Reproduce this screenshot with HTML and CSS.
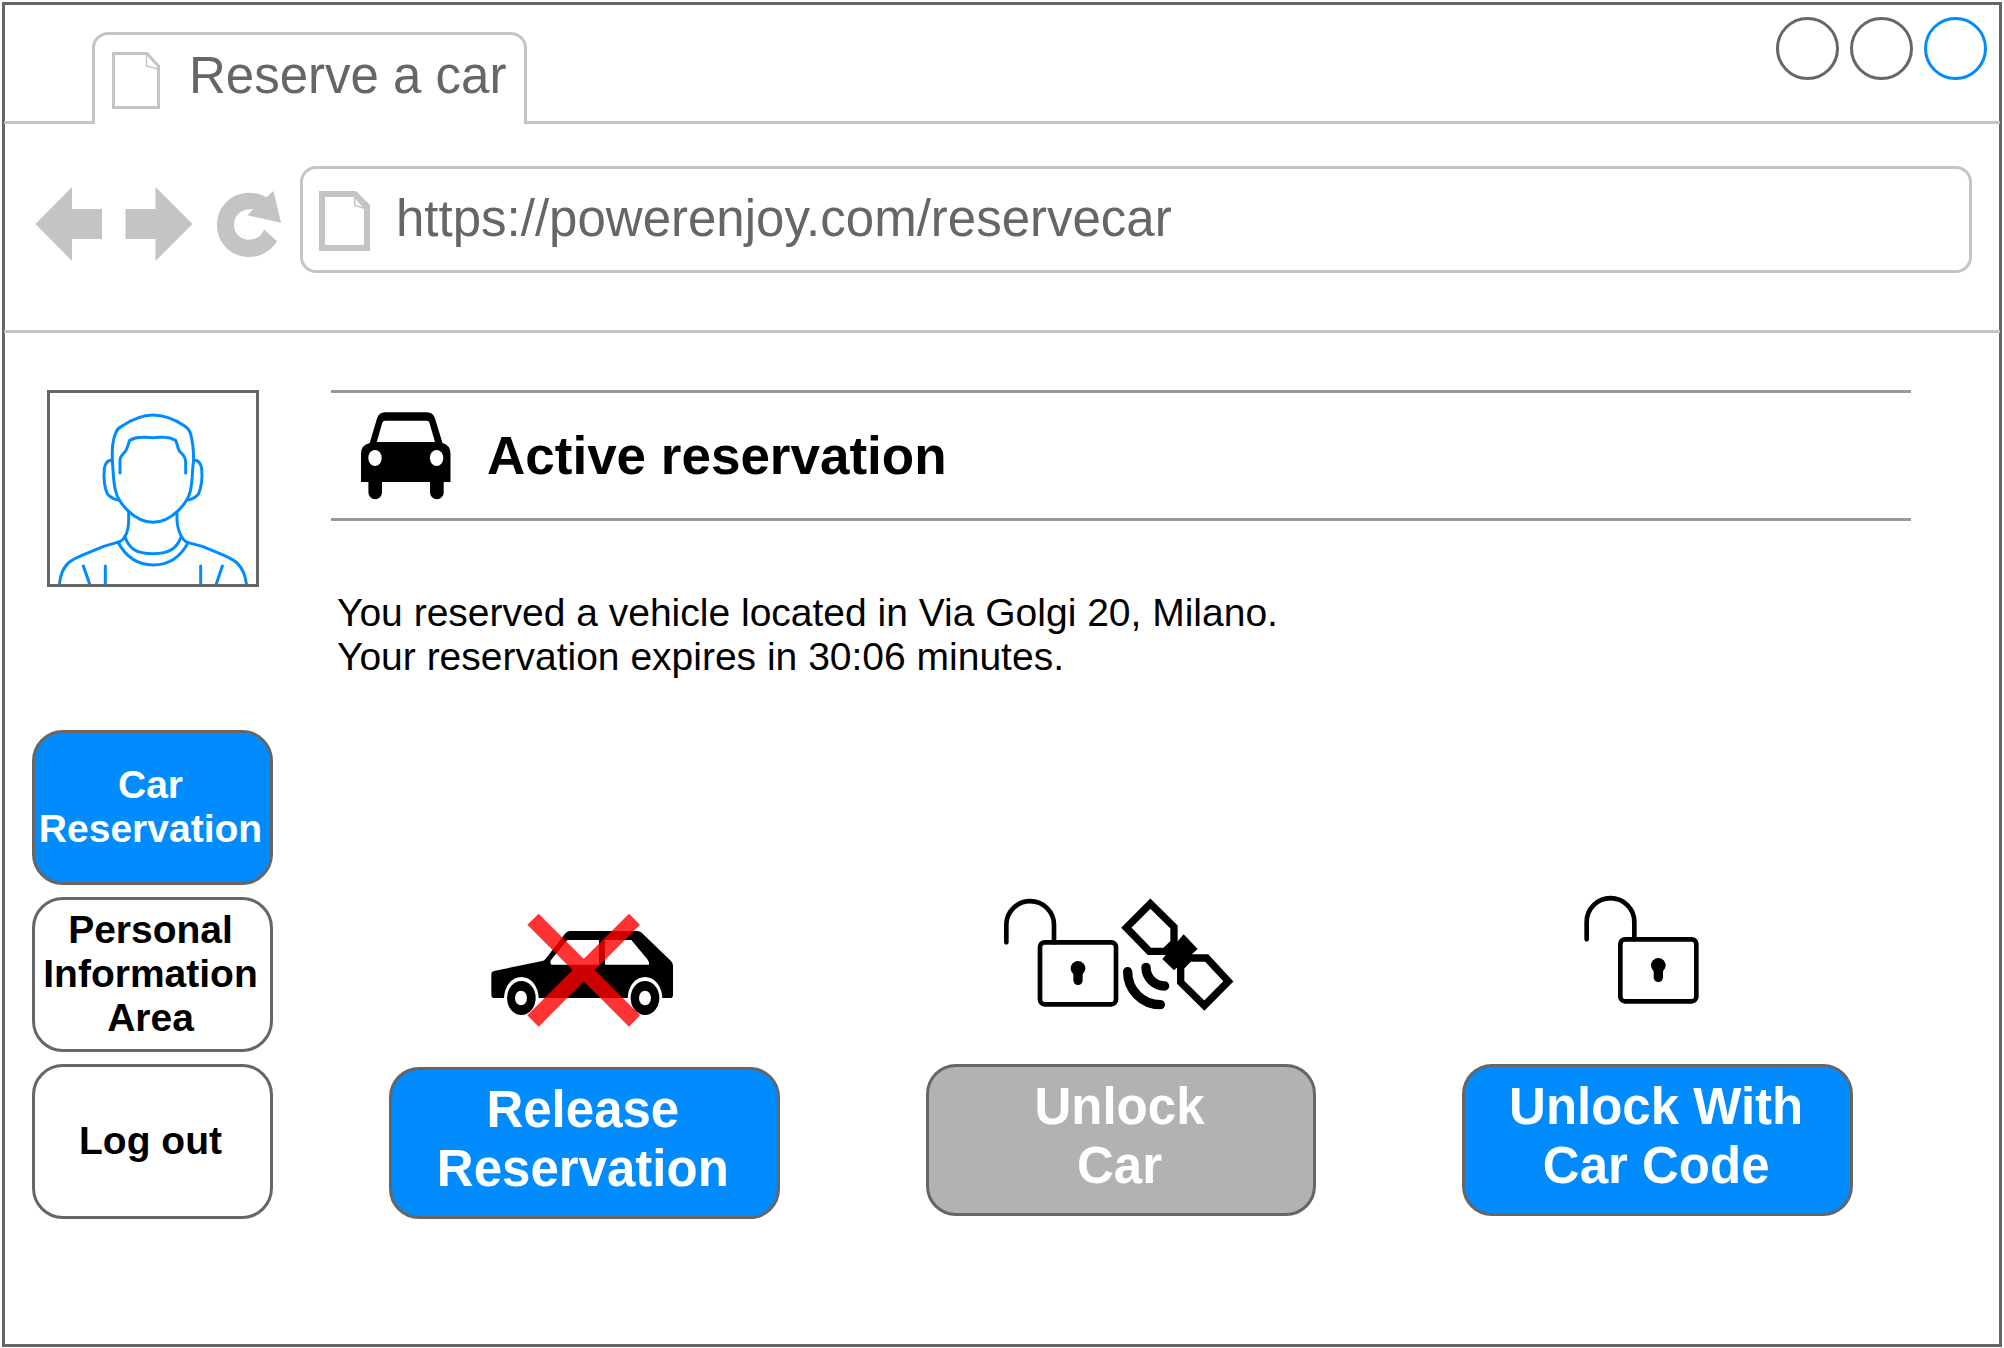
FILE: index.html
```html
<!DOCTYPE html>
<html lang="en">
<head>
<meta charset="utf-8">
<title>Reserve a car</title>
<link rel="stylesheet" href="styles.css">
</head>
<body>
<div class="window">
  <header class="titlebar">
    <div class="tab">
      <svg class="tab-icon" viewBox="0 0 48 57" aria-hidden="true">
        <path class="page-outline" stroke-width="3" d="M1.5 1.5H35L46.500 14V55.500H1.500Z"/>
        <path class="page-outline" stroke-width="1.500" d="M34.500 2V14L46 17"/>
      </svg>
      <span class="tab-label">Reserve a car</span>
    </div>
    <div class="window-controls">
      <button class="control" type="button" aria-label="Minimize"></button>
      <button class="control" type="button" aria-label="Maximize"></button>
      <button class="control control-close" type="button" aria-label="Close"></button>
    </div>
  </header>

  <div class="toolbar">
    <div class="history">
      <button class="tool" type="button" aria-label="Back">
        <svg viewBox="34 178 70 84"><path d="M35.500 224L72 187V209H102V239H72V261Z"/></svg>
      </button>
      <button class="tool" type="button" aria-label="Forward">
        <svg viewBox="124 178 70 84"><path d="M192.500 224L155.500 187V209H125.500V239H155.500V261Z"/></svg>
      </button>
      <button class="tool" type="button" aria-label="Reload">
        <svg viewBox="214 178 70 84"><path d="M273.500 191L281 222.700L247.500 215.300L253 209.300C242 208 234 215 234 225C234 234 241 239.700 249 239.700C256 239.700 262 236 264 229.300L277 241.300C271 251 261 257 249 257C231 257 217 243 217 225C217 207 231 192.700 249 192.700C255 192.700 261 194 266.300 197.300Z"/></svg>
      </button>
    </div>
    <div class="address">
      <svg class="address-icon" viewBox="0 0 51 60" aria-hidden="true">
        <path fill="#c4c4c4" fill-rule="evenodd" d="M0 0H37L51 14V60H0ZM6 6V54H45V18L35 15V6Z"/>
        <path fill="#fff" d="M36.500 8V14L43.500 16Z"/>
      </svg>
      <input class="address-input" type="text" aria-label="Address" value="https://powerenjoy.com/reservecar">
    </div>
  </div>

  <div class="page">
    <aside class="sidebar">
      <svg class="avatar" viewBox="89 66 618 573" role="img" aria-label="User picture">
        <path d="M276 268C274 230 280 200 286 186Q290 174 302 167C330 148 365 132 398 132C431 132 464 146 492 164Q506 173 510 186C516 206 520 240 520 268"/>
        <path d="M299 306V268Q299 260 305 253L316 240C322 230 324 218 328 208Q344 199 365 199Q381 198 398 200Q415 198 431 199Q450 199 466 208C471 218 471 230 477 240L489 253Q496 262 496 272V306"/>
        <path d="M276 268C279 300 278 332 286 360C294 396 342 454 398 454C454 454 502 396 510 360C517 330 515 300 520 268"/>
        <path d="M276 268C262 266 255 278 252 292C249 325 252 350 262 370Q276 386 298 388M520 268C534 266 541 278 544 292C547 325 543 350 534 370Q520 386 498 388"/>
        <path d="M325 427V447C325 482 313 510 291 514L250 526L190 551Q150 568 142 578C128 592 119 614 117 645M470 427V447C472 484 488 510 503 515L546 526L606 551Q644 568 652 578C668 594 676 614 679 645"/>
        <path d="M313 496C326 532 345 548 398 548C450 548 471 530 483 496M293 514C318 560 350 582 398 582C446 582 480 560 503 515"/>
        <path d="M189 585L210 645M255 585V645M541 585V645M606 585L586 645"/>
      </svg>
      <nav class="menu">
        <a class="menu-item menu-item-active" href="#reservation">Car Reservation</a>
        <a class="menu-item" href="#personal">Personal Information Area</a>
        <a class="menu-item" href="#logout">Log out</a>
      </nav>
    </aside>

    <main class="content">
      <div class="heading">
        <svg class="heading-icon" viewBox="361 411 90 88" aria-hidden="true">
          <path fill-rule="evenodd" d="M369.700 442L377 417.500Q379 411.300 385 411.300H427Q433 411.300 435 417.500L442.500 442Q450.500 444 450.500 453V481H443.700V491.500A6.800 6.800 0 0 1 430 491.500V481H382V491.500A6.800 6.800 0 0 1 368.400 491.500V481H361V453Q361 444 369.700 442ZM376.800 441H435L429.400 421.700Q429 419.700 427 419.700H385Q383 419.700 382.300 421.700Z"/>
          <ellipse fill="#fff" cx="375" cy="457" rx="6.700" ry="8"/>
          <ellipse fill="#fff" cx="436.600" cy="457" rx="6.700" ry="8"/>
        </svg>
        <h1 class="title">Active reservation</h1>
      </div>

      <p class="status">You reserved a vehicle located in Via Golgi 20, Milano.<br>Your reservation expires in 30:06 minutes.</p>

      <div class="actions">
        <div class="action">
          <svg class="action-icon" width="240" height="139" viewBox="-15 3 720 417" aria-hidden="true">
            <path fill-rule="evenodd" d="M67 249Q67 242 75 240L220 210Q226 208 230 203L288 128Q294 120 302 120H505Q513 120 518 125L606 210Q612 216 612 224V311Q612 321 603 321H76Q67 321 67 311ZM295 147L246 207Q242 215 247 221H390V147ZM408 147V221H540Q541 213 535 205L487 147Z"/>
            <path fill="#fff" d="M105 322A52 64 0 0 1 209 322ZM476 322A52 64 0 0 1 580 322Z"/>
            <ellipse cx="157" cy="321" rx="43" ry="51"/>
            <ellipse cx="528" cy="321" rx="43" ry="51"/>
            <ellipse fill="#fff" cx="156" cy="321" rx="18" ry="22"/>
            <ellipse fill="#fff" cx="528" cy="321" rx="18" ry="22"/>
            <path fill="#f00" fill-opacity=".8" d="M209 68L513 373L480 407L175 101ZM480 68L513 101L209 407L175 373Z"/>
          </svg>
          <button class="action-button" type="button">Release<br>Reservation</button>
        </div>
        <div class="action">
          <svg class="action-icon" width="240" height="136" viewBox="63 33 720 408" aria-hidden="true">
            <g id="open-lock">
              <path class="ink" stroke-width="14" d="M79 184V132A71 71 0 0 1 222 132V184"/>
              <rect class="ink" stroke-width="14" x="180" y="184" width="228" height="186" rx="14"/>
              <circle cx="294" cy="262" r="22"/>
              <path class="ink" stroke-width="28" d="M294 265V298"/>
            </g>
            <path class="ink" stroke-width="28" d="M443 272A98 98 0 0 0 541 371M498 259A56 56 0 0 0 554 315"/>
            <path class="panel" d="M511 68L582 138V185L555 211H508L439 140ZM680 231L745 301L673 374L602 304V258L628 231Z"/>
            <path d="M611 160L653 204L582 268L547 234Z"/>
          </svg>
          <button class="action-button" type="button" disabled>Unlock<br>Car</button>
        </div>
        <div class="action">
          <svg class="action-icon" width="240" height="136" viewBox="-63 33 720 408" aria-hidden="true">
            <use href="#open-lock" transform="translate(4 -9)"/>
          </svg>
          <button class="action-button" type="button">Unlock With<br>Car Code</button>
        </div>
      </div>
    </main>
  </div>
</div>
</body>
</html>
```
FILE: styles.css
```css
* {
  box-sizing: border-box;
}

body {
  margin: 0;
  background: #fff;
  color: #000;
  font-family: "Liberation Sans", Arial, Helvetica, sans-serif;
  display: flow-root;
}

button,
input {
  margin: 0;
  padding: 0;
  border: 0;
  background: none;
  font: inherit;
  color: inherit;
}

svg {
  display: block;
  flex: none;
}

.window {
  margin: 2px 2px 1px;
  min-height: calc(100vh - 3px);
  border: 3px solid #666;
}

/* Title bar: the tab hides the rule beneath it */
.titlebar {
  display: flex;
  justify-content: space-between;
  align-items: flex-end;
  margin: 0 -1px;
  padding: 12px 13px 0 88px;
  border-bottom: 3px solid #c4c4c4;
}

.tab {
  display: flex;
  align-items: center;
  gap: 29px;
  height: 92px;
  margin: 15px 0 -3px;
  padding: 2px 18px 0 17px;
  border: 3px solid #c4c4c4;
  border-bottom: 0;
  border-radius: 16px 16px 0 0;
  background: #fff;
  color: #666;
  font-size: 51px;
  line-height: 58px;
}

.tab-icon {
  width: 48px;
  height: 57px;
}

.page-outline {
  fill: none;
  stroke: #c4c4c4;
}

.tab-label {
  padding-bottom: 10px;
}

.window-controls {
  display: flex;
  gap: 11px;
  align-self: flex-start;
}

.control {
  width: 63px;
  height: 63px;
  border: 3px solid #666;
  border-radius: 50%;
}

.control-close {
  border-color: #008cff;
}

/* Toolbar */
.toolbar {
  display: flex;
  align-items: center;
  gap: 16px;
  margin: 0 -1px;
  padding: 42px 28px 57px 30px;
  border-bottom: 3px solid #c4c4c4;
}

.history {
  display: flex;
  gap: 20px;
}

.tool svg {
  width: 70px;
  height: 84px;
  fill: #c4c4c4;
}

.address {
  flex: 1;
  display: flex;
  align-items: center;
  gap: 26px;
  height: 107px;
  padding: 2px 16px 0;
  border: 3px solid #c4c4c4;
  border-radius: 16px;
}

.address-icon {
  width: 51px;
  height: 60px;
}

.address-input {
  flex: 1;
  min-width: 0;
  padding-bottom: 4px;
  color: #666;
  font-size: 51px;
}

/* Page */
.page {
  display: flex;
  gap: 58px;
  padding: 57px 88px 56px 27px;
}

.sidebar {
  flex: none;
  width: 241px;
}

.avatar {
  width: 212px;
  height: 197px;
  margin: 0 auto 143px;
  border: 3px solid #666;
  fill: none;
  stroke: #008cff;
  stroke-width: 9;
  stroke-linecap: round;
  stroke-linejoin: round;
}

.menu {
  display: grid;
  gap: 12px;
}

.menu-item {
  display: flex;
  align-items: center;
  justify-content: center;
  min-height: 155px;
  padding: 0 4px 2px 0;
  border: 3px solid #666;
  border-radius: 31px;
  color: #000;
  font-size: 39px;
  font-weight: bold;
  line-height: 44px;
  text-align: center;
  text-decoration: none;
}

.menu-item-active {
  background: #008cff;
  color: #fff;
}

.content {
  flex: 1;
  min-width: 0;
}

.heading {
  display: flex;
  align-items: center;
  gap: 36px;
  height: 131px;
  padding-left: 30px;
  border: 3px solid #999;
  border-width: 3px 0;
}

.heading-icon {
  width: 90px;
  height: 88px;
}

.title {
  margin: 0;
  font-size: 53px;
  line-height: 62px;
}

.status {
  margin: 70px 0 213px;
  padding-left: 6px;
  font-size: 39px;
  line-height: 44px;
}

.actions {
  display: grid;
  grid-template-columns: repeat(3, 1fr);
  gap: 146px;
  padding: 0 58px;
}

.action {
  display: flex;
  flex-direction: column;
  align-items: center;
  gap: 36px;
}

.ink {
  fill: none;
  stroke: #000;
  stroke-linecap: round;
}

.panel {
  fill: none;
  stroke: #000;
  stroke-width: 22;
}

.action-button {
  width: 100%;
  height: 152px;
  padding: 0 3px 8px 0;
  border: 3px solid #666;
  border-radius: 30px;
  background: #008cff;
  color: #fff;
  font-size: 51px;
  font-weight: bold;
  line-height: 59px;
}

.action-button:disabled {
  background: #b2b2b2;
}
```
